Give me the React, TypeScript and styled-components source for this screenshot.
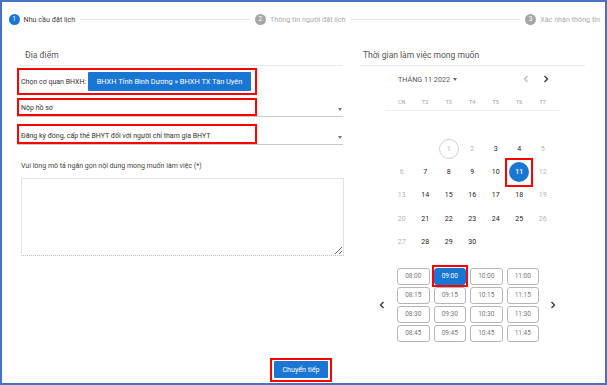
import * as React from 'react';
import styled, { createGlobalStyle, css } from 'styled-components';

const GlobalStyle = createGlobalStyle`
  html, body {
    margin: 0;
    padding: 0;
    background: #fff;
  }
  body {
    font-family: Roboto, 'Liberation Sans', Arial, sans-serif;
  }
`;

const BLUE = '#1976d2';
const MARK = '#f00';

const Frame = styled.div`
  width: 607px;
  height: 385px;
  box-sizing: border-box;
  border: 2px solid #4472c4;
  background: #fff;
  display: flex;
  flex-direction: column;
  overflow: hidden;
`;

/* stepper */

const Stepper = styled.div`
  display: flex;
  align-items: center;
  height: 12px;
  margin: 11px 5px 0 6.5px;
`;

const Step = styled.div`
  display: flex;
  align-items: center;
  gap: 4px;
`;

const StepDot = styled.span<{ $active?: boolean }>`
  width: 11px;
  height: 11px;
  border-radius: 50%;
  background: ${(p) => (p.$active ? BLUE : '#a6a6a6')};
  color: #fff;
  font-size: 6.5px;
  display: flex;
  align-items: center;
  justify-content: center;
`;

const StepLabel = styled.span<{ $active?: boolean }>`
  font-size: 7.2px;
  color: ${(p) => (p.$active ? '#444' : '#aaa')};
  white-space: nowrap;
`;

const StepLine = styled.div`
  flex: 1;
  height: 1px;
  background: #e6e6e6;
  margin: 0 5px;
`;

/* main */

const Main = styled.div`
  display: flex;
  margin: 20px 0 0 15px;
  gap: 15px;
`;

const LeftCol = styled.div`
  width: 328px;
  display: flex;
  flex-direction: column;
`;

const RightCol = styled.div`
  width: 225px;
  display: flex;
  flex-direction: column;
`;

const SectionTitle = styled.div<{ $inset: number }>`
  height: 20px;
  line-height: 20px;
  font-size: 8.5px;
  color: #555;
  padding-left: ${(p) => p.$inset}px;
  border-bottom: 1px solid #e8e8e8;
`;

const LeftTitle = styled(SectionTitle)`
  margin: 0 2px 0 3px;
`;

const AgencyBox = styled.div`
  margin-top: 2px;
  width: 240px;
  height: 27px;
  box-sizing: border-box;
  border: 2px solid ${MARK};
  display: flex;
  align-items: center;
  justify-content: space-between;
  padding: 0 4px 0 2px;
`;

const AgencyLabel = styled.span`
  font-size: 7px;
  color: #333;
  white-space: nowrap;
`;

const AgencyButton = styled.button`
  width: 163px;
  height: 19px;
  border: none;
  border-radius: 1px;
  background: ${BLUE};
  color: #fff;
  font-family: inherit;
  font-size: 7.4px;
  padding: 0;
  white-space: nowrap;
`;

const SelectField = styled.div<{ $height: number; $gap: number }>`
  position: relative;
  width: 326px;
  height: ${(p) => p.$height}px;
  margin-top: ${(p) => p.$gap}px;
  box-sizing: border-box;
  border-bottom: 1px solid #c9c9c9;
  display: flex;
  align-items: flex-end;
  justify-content: space-between;
  padding: 0 1px 3px 4px;

  &::before {
    content: '';
    position: absolute;
    left: 0;
    top: 0;
    width: 240px;
    height: ${(p) => p.$height - 1}px;
    box-sizing: border-box;
    border: 2px solid ${MARK};
  }
`;

const SelectText = styled.span`
  font-size: 7px;
  line-height: 9px;
  color: #333;
  white-space: nowrap;
`;

const SelectCaret = styled.span`
  width: 0;
  height: 0;
  margin-bottom: 2.5px;
  border-left: 2.5px solid transparent;
  border-right: 2.5px solid transparent;
  border-top: 3px solid #757575;
`;

const FieldLabel = styled.div`
  margin-top: 16px;
  padding-left: 4px;
  font-size: 7px;
  line-height: 10px;
  color: #444;
`;

const DescArea = styled.textarea`
  margin: 7px 0 0 4px;
  width: 323px;
  height: 78px;
  box-sizing: border-box;
  border: 1px solid #e3e3e3;
  border-bottom: 1px dotted #bdbdbd;
  outline: none;
  font-family: inherit;
  font-size: 7px;
`;

/* calendar */

const RightTitle = styled(SectionTitle)``;

const Calendar = styled.div`
  margin-left: 26px;
  width: 173px;
  display: flex;
  flex-direction: column;
`;

const MonthRow = styled.div`
  margin-top: 5px;
  height: 16px;
  display: flex;
  align-items: center;
  padding: 0 10px 0 12px;
`;

const MonthLabel = styled.span`
  font-size: 7.2px;
  color: #555;
  display: flex;
  align-items: center;
  gap: 3px;
  flex: 1;
`;

const MonthCaret = styled.span`
  width: 0;
  height: 0;
  border-left: 2.5px solid transparent;
  border-right: 2.5px solid transparent;
  border-top: 3px solid #666;
`;

const NavArrows = styled.div`
  display: flex;
  align-items: center;
  gap: 14px;
`;

const WeekRow = styled.div`
  margin-top: 8px;
  height: 15px;
  display: grid;
  grid-template-columns: repeat(7, 23.5px);
  padding: 0 4px;
  border-bottom: 1px solid #ececec;
`;

const WeekDay = styled.span`
  font-size: 5.5px;
  color: #9e9e9e;
  text-align: center;
  line-height: 14px;
`;

const DayGrid = styled.div`
  margin-top: 26px;
  display: grid;
  grid-template-columns: repeat(7, 23.5px);
  grid-auto-rows: 23.33px;
  padding: 0 4px;
`;

const DayCell = styled.div`
  display: flex;
  align-items: center;
  justify-content: center;
`;

const DayCircle = styled.span<{ $muted?: boolean; $today?: boolean; $selected?: boolean }>`
  position: relative;
  width: 20px;
  height: 20px;
  box-sizing: border-box;
  border-radius: 50%;
  display: flex;
  align-items: center;
  justify-content: center;
  font-size: 7px;
  font-weight: 400;
  color: ${(p) => (p.$muted ? '#b5b5b5' : '#222')};
  ${(p) =>
    p.$today &&
    css`
      border: 1px solid #d0d0d0;
    `}
  ${(p) =>
    p.$selected &&
    css`
      background: ${BLUE};
      color: #fff;
      font-weight: 500;
      &::after {
        content: '';
        position: absolute;
        inset: -4px -4px -5px -4px;
        border: 2px solid ${MARK};
      }
    `}
`;

/* time slots */

const TimeRow = styled.div`
  margin-top: 14px;
  padding-left: 18px;
  display: flex;
  align-items: center;
`;

const ArrowBox = styled.span`
  width: 8px;
  display: flex;
  justify-content: center;
`;

const SlotGrid = styled.div`
  margin: 0 10px 0 11px;
  display: grid;
  grid-template-columns: repeat(4, 32.5px);
  grid-auto-rows: 17px;
  column-gap: 4px;
  row-gap: 2px;
`;

const Slot = styled.span<{ $selected?: boolean }>`
  position: relative;
  box-sizing: border-box;
  border: 1.2px solid ${(p) => (p.$selected ? BLUE : '#b5b5b5')};
  border-radius: 3px;
  background: ${(p) => (p.$selected ? BLUE : '#fff')};
  color: ${(p) => (p.$selected ? '#fff' : '#777')};
  font-size: 6.5px;
  display: flex;
  align-items: center;
  justify-content: center;
  ${(p) =>
    p.$selected &&
    css`
      &::after {
        content: '';
        position: absolute;
        inset: -4px -3px -3px -3px;
        border: 2px solid ${MARK};
      }
    `}
`;

/* footer */

const Footer = styled.div`
  margin-top: 19px;
  display: flex;
  justify-content: center;
  padding-right: 5px;
`;

const NextButton = styled.button`
  position: relative;
  width: 54px;
  height: 17px;
  border: none;
  border-radius: 1px;
  background: ${BLUE};
  color: #fff;
  font-family: inherit;
  font-size: 7.1px;
  padding: 0;

  &::after {
    content: '';
    position: absolute;
    inset: -3px -4px -4px -4px;
    border: 2px solid ${MARK};
  }
`;

const Chevron = ({ dir, color }: { dir: 'left' | 'right'; color: string }) => (
  <svg width="6" height="8" viewBox="0 0 6 8">
    <polyline
      points={dir === 'left' ? '4.5,1 1.5,4 4.5,7' : '1.5,1 4.5,4 1.5,7'}
      fill="none"
      stroke={color}
      strokeWidth="1.3"
    />
  </svg>
);

const weekDays = ['CN', 'T2', 'T3', 'T4', 'T5', 'T6', 'T7'];
const mutedDays = [1, 2, 5, 6, 12, 13, 19, 20, 26, 27];
const hours = ['08', '09', '10', '11'];
const minutes = ['00', '15', '30', '45'];

export default function App() {
  const leading = 2; // 1/11/2022 is a Tuesday
  const cells: (number | null)[] = [];
  for (let i = 0; i < leading; i++) cells.push(null);
  for (let d = 1; d <= 30; d++) cells.push(d);

  return (
    <>
      <GlobalStyle />
      <Frame>
        <Stepper>
          <Step>
            <StepDot $active>1</StepDot>
            <StepLabel $active>Nhu cầu đặt lịch</StepLabel>
          </Step>
          <StepLine />
          <Step>
            <StepDot>2</StepDot>
            <StepLabel>Thông tin người đặt lịch</StepLabel>
          </Step>
          <StepLine />
          <Step>
            <StepDot>3</StepDot>
            <StepLabel>Xác nhận thông tin</StepLabel>
          </Step>
        </Stepper>

        <Main>
          <LeftCol>
            <LeftTitle $inset={5}>Địa điểm</LeftTitle>
            <AgencyBox>
              <AgencyLabel>Chọn cơ quan BHXH:</AgencyLabel>
              <AgencyButton>BHXH Tỉnh Bình Dương » BHXH TX Tân Uyên</AgencyButton>
            </AgencyBox>
            <SelectField $height={19} $gap={3}>
              <SelectText>Nộp hồ sơ</SelectText>
              <SelectCaret />
            </SelectField>
            <SelectField $height={21} $gap={7}>
              <SelectText>Đăng ký đóng, cấp thẻ BHYT đối với người chỉ tham gia BHYT</SelectText>
              <SelectCaret />
            </SelectField>
            <FieldLabel>Vui lòng mô tả ngắn gọn nội dung mong muốn làm việc (*)</FieldLabel>
            <DescArea />
          </LeftCol>

          <RightCol>
            <RightTitle $inset={3}>Thời gian làm việc mong muốn</RightTitle>
            <Calendar>
              <MonthRow>
                <MonthLabel>
                  THÁNG 11 2022
                  <MonthCaret />
                </MonthLabel>
                <NavArrows>
                  <Chevron dir="left" color="#bdbdbd" />
                  <Chevron dir="right" color="#333" />
                </NavArrows>
              </MonthRow>
              <WeekRow>
                {weekDays.map((w) => (
                  <WeekDay key={w}>{w}</WeekDay>
                ))}
              </WeekRow>
              <DayGrid>
                {cells.map((d, i) => (
                  <DayCell key={i}>
                    {d !== null && (
                      <DayCircle
                        $muted={mutedDays.includes(d)}
                        $today={d === 1}
                        $selected={d === 11}
                      >
                        {d}
                      </DayCircle>
                    )}
                  </DayCell>
                ))}
              </DayGrid>
            </Calendar>

            <TimeRow>
              <ArrowBox>
                <Chevron dir="left" color="#333" />
              </ArrowBox>
              <SlotGrid>
                {minutes.map((m) =>
                  hours.map((h) => (
                    <Slot key={h + m} $selected={h === '09' && m === '00'}>
                      {h}:{m}
                    </Slot>
                  ))
                )}
              </SlotGrid>
              <ArrowBox>
                <Chevron dir="right" color="#333" />
              </ArrowBox>
            </TimeRow>
          </RightCol>
        </Main>

        <Footer>
          <NextButton>Chuyển tiếp</NextButton>
        </Footer>
      </Frame>
    </>
  );
}
